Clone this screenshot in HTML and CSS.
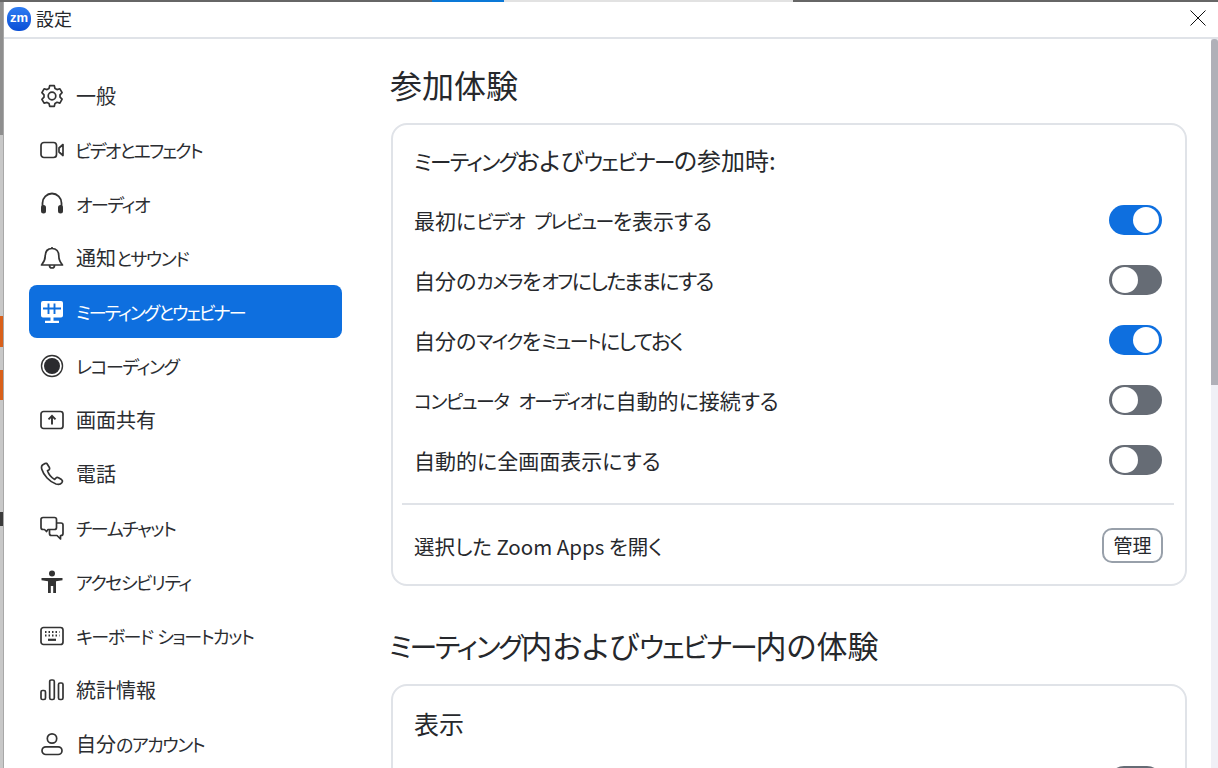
FILE: index.html
```html
<!DOCTYPE html>
<html lang="ja">
<head>
<meta charset="utf-8">
<title>設定</title>
<link rel="stylesheet" href="styles.css">
</head>
<body>
<div class="screen">
  <div class="topline"><span class="tl-a"></span><span class="tl-b"></span><span class="tl-c"></span><span class="tl-d"></span></div>
  <div class="desk">
    <div class="strip">
      <i class="s s1"></i><i class="s s2"></i><i class="s s3"></i><i class="s s4"></i><i class="s s5"></i><i class="s s6"></i><i class="s s7"></i>
    </div>
    <div class="window">
      <header class="titlebar">
        <div class="logo">zm</div>
        <div class="title">設定</div>
        <svg class="close" viewBox="0 0 16 16"><path d="M.5.5l15 15M15.500.5l-15 15" fill="none" stroke="#111" stroke-width="1"/></svg>
      </header>
      <div class="body">
        <nav class="side">
          <a class="item"><svg class="ic" viewBox="0 0 24 24" fill="none" stroke="#333" stroke-width="1.700"><circle cx="12" cy="12" r="3.800"/><path d="M9.700 1.600h4.600l.7 2.900 2 1.100 2.900-.8 2.200 3.900-2.100 2.100v2.300l2.100 2.100-2.200 3.900-2.900-.8-2 1.100-.7 2.900H9.700L9 19.500l-2-1.100-2.900.8-2.200-3.900L4 13.200v-2.300L1.900 8.700l2.200-3.900 2.900.8 2-1.100z" stroke-linejoin="round"/></svg><span>一般</span></a>
          <a class="item"><svg class="ic" viewBox="0 0 24 24" fill="none" stroke="#333" stroke-width="1.700"><rect x="1" y="4.500" width="15.500" height="15" rx="3"/><path d="M23 6.500l-4 3.500v4l4 3.500z" stroke-linejoin="round"/></svg><span class="k tight">ビデオとエフェクト</span></a>
          <a class="item"><svg class="ic" viewBox="0 0 24 24" fill="none"><path d="M2.500 15v-4a9.500 9.500 0 0 1 19 0v4" stroke="#333" stroke-width="1.800"/><rect x="1" y="13" width="5" height="8.500" rx="2.500" fill="#333"/><rect x="18" y="13" width="5" height="8.500" rx="2.500" fill="#333"/></svg><span class="k">オーディオ</span></a>
          <a class="item"><svg class="ic" viewBox="0 0 24 24" fill="none" stroke="#333" stroke-width="1.700"><path d="M12 2.500c-4.500 0-6.800 3.200-6.800 7.500 0 4.500-1.500 6.500-3.700 9h21c-2.200-2.500-3.700-4.500-3.700-9 0-4.300-2.300-7.500-6.800-7.500zM12 1v1.500M9.500 19.500a2.500 2.500 0 0 0 5 0" stroke-linejoin="round"/></svg><span>通知<span class="k">とサウンド</span></span></a>
          <a class="item active"><svg class="ic" viewBox="0 0 24 24"><path d="M3 1h18a2 2 0 0 1 2 2v12.500a2 2 0 0 1-2 2h-7.500v3.200H19V23H5v-2.300h5.500v-3.200H3a2 2 0 0 1-2-2V3a2 2 0 0 1 2-2z" fill="#fff"/><path d="M3 8.500h18M8.500 3.500V14M14.500 3.500V14" fill="none" stroke="#0e6fdf" stroke-width="1.900"/></svg><span class="k snug">ミーティングとウェビナー</span></a>
          <a class="item"><svg class="ic" viewBox="0 0 24 24" fill="none"><circle cx="12" cy="12" r="10.500" stroke="#333" stroke-width="1.400"/><circle cx="12" cy="12" r="8" fill="#2b2b2e"/></svg><span class="k">レコーディング</span></a>
          <a class="item"><svg class="ic" viewBox="0 0 24 24" fill="none" stroke="#333" stroke-width="1.700"><rect x="1" y="3.500" width="22" height="17" rx="2.500"/><path d="M12 16.500V8M8.500 11.300L12 7.800l3.500 3.500" stroke-width="1.900"/></svg><span>画面共有</span></a>
          <a class="item"><svg class="ic" viewBox="0 0 24 24" fill="none" stroke="#333" stroke-width="1.700"><path d="M5 1.500L2.500 3c-1.200 1-1.200 2.500-.7 4.300C3.500 13 9.500 20 16 22c2.500.7 4.700.3 5.800-1.200.8-1.200.7-2.500-.3-3.200l-3-1.800c-1-.6-2-.4-2.800.5l-1 1.100c-3-1.500-6-5-7.200-8.600l1.300-.8c.8-.6 1-1.500.6-2.500L7.500 2.500C7 1.400 6 1 5 1.500z" stroke-linejoin="round"/></svg><span>電話</span></a>
          <a class="item"><svg class="ic" viewBox="0 0 24 24" fill="none" stroke="#333" stroke-width="1.700"><path d="M3 1.500h11.500a2 2 0 0 1 2 2v8a2 2 0 0 1-2 2H8l-1.500 2-2-2H3a2 2 0 0 1-2-2v-8a2 2 0 0 1 2-2z" stroke-linejoin="round"/><path d="M16.500 7H21a2 2 0 0 1 2 2v8.500a2 2 0 0 1-2 2h-.5V23L17 19.500h-5.500a2 2 0 0 1-2-2v-4" stroke-linejoin="round"/></svg><span class="k">チームチャット</span></a>
          <a class="item"><svg class="ic" viewBox="0 0 24 24"><circle cx="12" cy="3.500" r="3" fill="#333"/><path d="M1.500 8h21v2.200l-6.500 1V23h-2.800v-7h-2.400v7H8V11.200l-6.500-1z" fill="#333"/></svg><span class="k">アクセシビリティ</span></a>
          <a class="item"><svg class="ic" viewBox="0 0 24 24" fill="none"><rect x="1" y="3.500" width="22" height="17" rx="2.500" stroke="#333" stroke-width="1.700"/><path d="M5 8h1.500M8.500 8H10M12 8h1.500M15.500 8H17M19 8h.5M5 11.500h1.500M8.500 11.500H10M12 11.500h1.500M15.500 11.500H17M19 11.500h.5" stroke="#333" stroke-width="1.800"/><path d="M8 15.800h8" stroke="#333" stroke-width="2.200"/></svg><span class="k">キーボード ショートカット</span></a>
          <a class="item"><svg class="ic" viewBox="0 0 24 24" fill="none" stroke="#333" stroke-width="1.700"><rect x="1" y="12.500" width="4.500" height="9" rx="1.500"/><rect x="9.700" y="2" width="4.600" height="19.500" rx="1.500"/><rect x="18.500" y="5" width="4.500" height="16.500" rx="1.500"/></svg><span>統計情報</span></a>
          <a class="item"><svg class="ic" viewBox="0 0 24 24" fill="none" stroke="#333" stroke-width="1.700"><circle cx="12" cy="6.500" r="4.700"/><rect x="2" y="14.800" width="20" height="7.700" rx="3.850"/></svg><span>自分<span class="k">のアカウント</span></span></a>
        </nav>
        <main class="content">
          <h2 class="h h1st">参加体験</h2>
          <section class="card">
            <h3 class="card-title"><span class="k">ミーティング</span>および<span class="k">ウェビナー</span>の参加時:</h3>
            <div class="row"><span>最初に<span class="k">ビデオ プレビュー</span>を表示する</span><i class="tg on"></i></div>
            <div class="row"><span>自分の<span class="k">カメラ</span>を<span class="k">オフ</span><span class="n">にしたままにする</span></span><i class="tg"></i></div>
            <div class="row"><span>自分の<span class="k">マイク</span>を<span class="k">ミュート</span><span class="n">にしておく</span></span><i class="tg on"></i></div>
            <div class="row"><span><span class="k">コンピュータ オーディオ</span>に自動的に接続する</span><i class="tg"></i></div>
            <div class="row"><span>自動的に全画面表示にする</span><i class="tg"></i></div>
            <div class="sep"></div>
            <div class="row last"><span>選択した Zoom Apps を開く</span><button class="btn">管理</button></div>
          </section>
          <h2 class="h h2nd"><span class="k">ミーティング</span>内および<span class="k">ウェビナー</span>内の体験</h2>
          <section class="card second">
            <h3 class="disp">表示</h3>
            <div class="row cut"><span></span><i class="tg"></i></div>
          </section>
        </main>
        <div class="scroll"><div class="thumb"></div></div>
      </div>
    </div>
  </div>
</div>
</body>
</html>
```
FILE: styles.css
```css
* { box-sizing: border-box; }
html, body { margin: 0; height: 100%; overflow: hidden; background: #fff; }
body { font-family: "Noto Sans CJK JP", "Noto Sans", sans-serif; font-feature-settings: "palt"; font-weight: 400; color: #26282c; }
.k { font-size: .9em; letter-spacing: -.08em; }
.n { letter-spacing: -.08em; }
.item .k { word-spacing: .1em; }
.item .tight { margin-left: -1px; letter-spacing: -.1em; }
.item .snug { letter-spacing: -.11em; }
.row .k { word-spacing: .4em; }
.screen { width: 1218px; height: 768px; display: flex; flex-direction: column; overflow: hidden; }
.topline { display: flex; height: 2px; flex: none; background: #666; }
.tl-a { width: 432px; }
.tl-b { width: 72px; background: #0a78d7; }
.tl-c { width: 289px; background: #e2e2e2; }
.desk { display: flex; flex: 1; min-height: 0; }
.strip { width: 4px; flex: none; display: flex; flex-direction: column; background: #c8c8c8; border-right: 1px solid #a8a8a8; }
.s { display: block; }
.s1 { height: 133px; background: #8e8e8e; }
.s2 { height: 181px; }
.s3 { height: 31px; background: #d9601a; }
.s4 { height: 23px; }
.s5 { height: 30px; background: #d9601a; }
.s6 { height: 112px; }
.s7 { height: 14px; background: #3a3a3a; }
.window { flex: 1; min-width: 0; display: flex; flex-direction: column; background: #fff; }
.titlebar { height: 37px; flex: none; display: flex; align-items: center; border-bottom: 2px solid #e0e3e8; padding: 0 12px 0 3px; }
.logo { width: 24px; height: 24px; border-radius: 46%; margin-top: -2px; background: linear-gradient(#2d7cf2, #0b4fd6); color: #fff; font: 700 13px/22px "Liberation Sans", sans-serif; text-align: center; }
.title { margin-left: 5px; margin-top: -3px; font-size: 18px; line-height: 24px; }
.close { width: 16px; height: 16px; margin-left: auto; margin-top: -3px; }
.body { flex: 1; min-height: 0; display: flex; }
.side { width: 338px; flex: none; padding: 30px 0 0 25px; display: flex; flex-direction: column; gap: 1px; }
.item { height: 53px; flex: none; width: 313px; display: flex; align-items: center; padding-left: 11px; gap: 12px; font-size: 20px; border-radius: 8px; white-space: nowrap; color: #2b2d31; }
.ic { width: 24px; height: 24px; flex: none; }
.active { background: #0e6fdf; color: #fff; }
.content { width: 869px; flex: none; padding-left: 49px; overflow: hidden; height: 729px; }
.h { margin: 0; font-weight: 400; font-size: 32px; line-height: 44px; color: #26282c; }
.h1st { padding-top: 23px; height: 84px; margin-left: -1px; }
.h2nd { margin: 36px 0 0 -2px; height: 62px; line-height: 46px; font-size: 31px; }
.card { width: 796px; border: 2px solid #e0e3e8; border-radius: 16px; padding: 0 11px 0 9px; height: 463px; }
.card.second { height: 200px; }
.card-title { margin: 0; height: 65px; padding: 20px 0 0 12px; font-weight: 400; font-size: 24px; line-height: 30px; }
.row { height: 60px; display: flex; align-items: center; justify-content: space-between; padding: 0 12px; font-size: 21px; }
.sep { height: 2px; background: #e0e3e8; margin: 13px 0 1px; }
.row.last { height: 79px; padding-right: 11px; font-size: 20.5px; }
.tg { display: block; position: relative; width: 53px; height: 30px; border-radius: 15px; background: #666c75; flex: none; }
.tg::after { content: ""; position: absolute; left: 3px; top: 2px; width: 26px; height: 26px; border-radius: 50%; background: #fff; }
.tg.on { background: #0e6fdf; }
.tg.on::after { left: 24px; }
.btn { width: 61px; height: 35px; border: 2px solid #98a0aa; border-radius: 10px; background: #fff; font: inherit; font-size: 19px; line-height: 1; padding: 0 0 3px; color: #26282c; }
.disp { margin: 0; padding: 19px 0 0 12px; height: 80px; font-weight: 400; font-size: 25px; line-height: 36px; }
.row.cut { height: 30px; }
.scroll { width: 7px; flex: none; margin-left: auto; background: #f0f0f6; }
.thumb { height: 346px; background: #b0b0b8; border-radius: 3px 3px 0 0; }
```
